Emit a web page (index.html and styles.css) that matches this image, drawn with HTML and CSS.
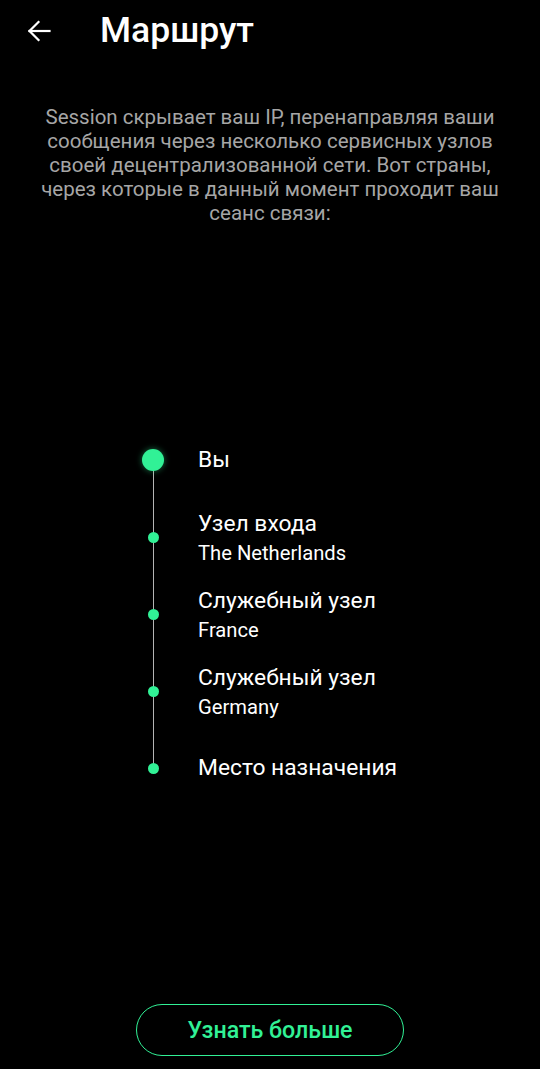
FILE: index.html
```html
<!DOCTYPE html>
<html lang="ru">
<head>
<meta charset="utf-8">
<link rel="stylesheet" href="styles.css">
</head>
<body>
<div class="screen">
  <header class="topbar">
    <svg class="back" width="24" height="22" viewBox="0 0 24 22" fill="none" stroke="#fff" stroke-width="2.2" stroke-linecap="square">
      <path d="M2.5 11H22.5"/>
      <path d="M11.5 2L2.5 11L11.5 20"/>
    </svg>
    <h1 class="title">Маршрут</h1>
  </header>
  <p class="intro">Session скрывает ваш IP, перенаправляя ваши сообщения через несколько сервисных узлов своей децентрализованной сети. Вот страны, через которые в данный момент проходит ваш сеанс связи:</p>
  <div class="path">
    <div class="row">
      <div class="node"><span class="dot big"></span></div>
      <div class="label"><div class="name">Вы</div></div>
    </div>
    <div class="row">
      <div class="node"><span class="dot"></span></div>
      <div class="label"><div class="name">Узел входа</div><div class="sub">The Netherlands</div></div>
    </div>
    <div class="row">
      <div class="node"><span class="dot"></span></div>
      <div class="label"><div class="name">Служебный узел</div><div class="sub">France</div></div>
    </div>
    <div class="row">
      <div class="node"><span class="dot"></span></div>
      <div class="label"><div class="name">Служебный узел</div><div class="sub">Germany</div></div>
    </div>
    <div class="row">
      <div class="node"><span class="dot"></span></div>
      <div class="label"><div class="name">Место назначения</div></div>
    </div>
  </div>
  <div class="bottom">
    <button class="more">Узнать больше</button>
  </div>
</div>
</body>
</html>
```
FILE: styles.css
```css
* { box-sizing: border-box; }
html, body { margin: 0; padding: 0; background: #000; }
body {
  font-family: Roboto, "Noto Sans", sans-serif;
  color: #fff;
}
.screen {
  width: 540px;
  height: 1069px;
  display: flex;
  flex-direction: column;
}
.topbar {
  height: 64px;
  display: flex;
  align-items: center;
  padding-left: 27px;
}
.back { display: block; margin-top: -3px; }
.title {
  margin: -2px 0 0 49px;
  font-size: 35.5px;
  font-weight: 500;
  line-height: 1;
}
.intro {
  margin: 41px 0 0;
  padding: 0 28px;
  text-align: center;
  color: #a6a6a6;
  font-size: 20.5px;
  line-height: 24px;
}
.path {
  margin-top: 196.5px;
  padding-left: 142px;
  position: relative;
}
.path::before {
  content: "";
  position: absolute;
  left: 152.5px;
  top: 38.5px;
  height: 308px;
  width: 1px;
  background: #b4b4b4;
}
.row {
  height: 77px;
  display: flex;
  align-items: center;
}
.node {
  width: 22px;
  display: flex;
  justify-content: center;
  position: relative;
}
.dot {
  display: block;
  width: 11px;
  height: 11px;
  border-radius: 50%;
  background: #31f196;
}
.dot.big {
  width: 22px;
  height: 22px;
  box-shadow: 0 0 6px rgba(49, 241, 150, 0.45);
}
.label { margin-left: 34px; }
.name {
  font-size: 22.8px;
  line-height: 28px;
}
.sub {
  font-size: 20.2px;
  line-height: 24px;
  margin-top: 3px;
}
.bottom {
  margin-top: auto;
  display: flex;
  justify-content: center;
  padding-bottom: 13px;
}
.more {
  width: 268px;
  height: 52px;
  border: 1.5px solid #31f196;
  border-radius: 26px;
  background: transparent;
  color: #31f196;
  font-family: Roboto, "Noto Sans", sans-serif;
  font-size: 23.2px;
  font-weight: 500;
  padding: 0;
}
```
